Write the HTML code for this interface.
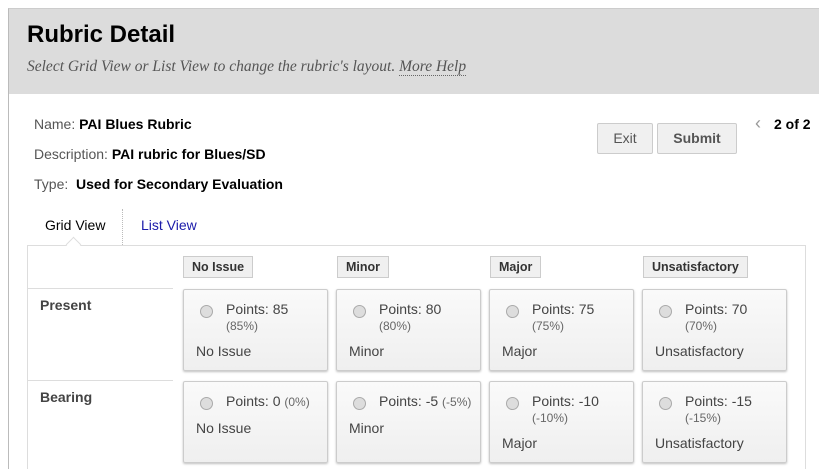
<!DOCTYPE html>
<html><head><style>
html,body{margin:0;width:819px;height:469px;overflow:hidden}
body{background:#fff;font-family:"Liberation Sans",Arial,sans-serif;position:relative}
.a{position:absolute}
.panel{left:8px;top:8px;width:820px;height:470px;border-left:1px solid #bbb;border-top:1px solid #ccc}
.hdr{left:9px;top:9px;width:810px;height:85px;background:#dcdcdc}
h1{position:absolute;left:27px;top:21px;margin:0;font-size:24px;font-weight:bold;color:#000}
.sub{left:27px;top:58px;font-family:"Liberation Serif",serif;font-style:italic;font-size:15.5px;color:#555}
.sub u{text-decoration:none;border-bottom:1px dotted #666}
.lbl{font-size:14px;color:#555}
.lbl b{color:#000}
.btn{background:#f0f0f0;border:1px solid #ccc;border-radius:2px;font-size:14px;color:#555;text-align:center;line-height:29px;height:29px}
.hb{background:#f0f0f0;border:1px solid #ccc;font-size:12.5px;font-weight:bold;color:#333;height:20px;line-height:20px;padding:0 8px}
.cell{width:143px;background:linear-gradient(#fafafa,#efefef);border:1px solid #ccc;border-radius:2px;box-shadow:0 1px 2px rgba(0,0,0,.25);height:80px}
.cell .r{position:absolute;left:16px;top:15px;width:11px;height:11px;border-radius:50%;background:#ddd;border:1px solid #aaa}
.cell .p{position:absolute;left:42px;top:11px;font-size:14px;color:#444;line-height:16px}
.cell .p small{font-size:12px;color:#666}
.cell .d{position:absolute;left:12px;font-size:14px;color:#444}
.row{font-size:14px;font-weight:bold;color:#444}
</style></head><body>
<div class="a panel"></div>
<div class="a hdr"></div>
<h1>Rubric Detail</h1>
<div class="a sub">Select Grid View or List View to change the rubric's layout. <u>More Help</u></div>
<div class="a lbl" style="left:34px;top:116px">Name: <b>PAI Blues Rubric</b></div>
<div class="a lbl" style="left:34px;top:146px">Description: <b>PAI rubric for Blues/SD</b></div>
<div class="a lbl" style="left:34px;top:176px">Type: &nbsp;<b>Used for Secondary Evaluation</b></div>
<div class="a btn" style="left:597px;top:123px;width:54px">Exit</div>
<div class="a btn" style="left:657px;top:123px;width:78px;font-weight:bold">Submit</div>
<div class="a" style="left:755px;top:113px;font-size:18px;color:#999">&lsaquo;</div>
<div class="a" style="left:774px;top:116px;font-size:14px;font-weight:bold">2 of 2</div>
<div class="a" style="left:45px;top:217px;font-size:14px;color:#000">Grid View</div>
<div class="a" style="left:122px;top:209px;height:36px;border-left:1px dotted #bbb"></div>
<div class="a" style="left:141px;top:217px;font-size:14px;color:#1a1aaa">List View</div>
<div class="a" style="left:27px;top:245px;width:777px;height:230px;border:1px solid #ddd;border-bottom:none"></div>
<div class="a" style="left:68px;top:239px;width:10px;height:10px;background:#fff;border-left:1px solid #ddd;border-top:1px solid #ddd;transform:rotate(45deg)"></div>
<div class="a" style="left:28px;top:288px;width:145px;border-top:1px solid #ddd"></div>
<div class="a" style="left:28px;top:380px;width:145px;border-top:1px solid #ddd"></div>
<div class="a row" style="left:40px;top:297px">Present</div>
<div class="a row" style="left:40px;top:389px">Bearing</div>
<div class="a hb" style="left:183px;top:256px">No Issue</div>
<div class="a hb" style="left:337px;top:256px">Minor</div>
<div class="a hb" style="left:490px;top:256px">Major</div>
<div class="a hb" style="left:643px;top:256px">Unsatisfactory</div>

<div class="a cell" style="left:183px;top:289px"><div class="r"></div><div class="p">Points: 85<br><small>(85%)</small></div><div class="d" style="top:53px">No Issue</div></div>
<div class="a cell" style="left:336px;top:289px"><div class="r"></div><div class="p">Points: 80<br><small>(80%)</small></div><div class="d" style="top:53px">Minor</div></div>
<div class="a cell" style="left:489px;top:289px"><div class="r"></div><div class="p">Points: 75<br><small>(75%)</small></div><div class="d" style="top:53px">Major</div></div>
<div class="a cell" style="left:642px;top:289px"><div class="r"></div><div class="p">Points: 70<br><small>(70%)</small></div><div class="d" style="top:53px">Unsatisfactory</div></div>

<div class="a cell" style="left:183px;top:381px"><div class="r"></div><div class="p">Points: 0 <small>(0%)</small></div><div class="d" style="top:38px">No Issue</div></div>
<div class="a cell" style="left:336px;top:381px"><div class="r"></div><div class="p">Points: -5 <small>(-5%)</small></div><div class="d" style="top:38px">Minor</div></div>
<div class="a cell" style="left:489px;top:381px"><div class="r"></div><div class="p">Points: -10<br><small>(-10%)</small></div><div class="d" style="top:53px">Major</div></div>
<div class="a cell" style="left:642px;top:381px"><div class="r"></div><div class="p">Points: -15<br><small>(-15%)</small></div><div class="d" style="top:53px">Unsatisfactory</div></div>
</body></html>
